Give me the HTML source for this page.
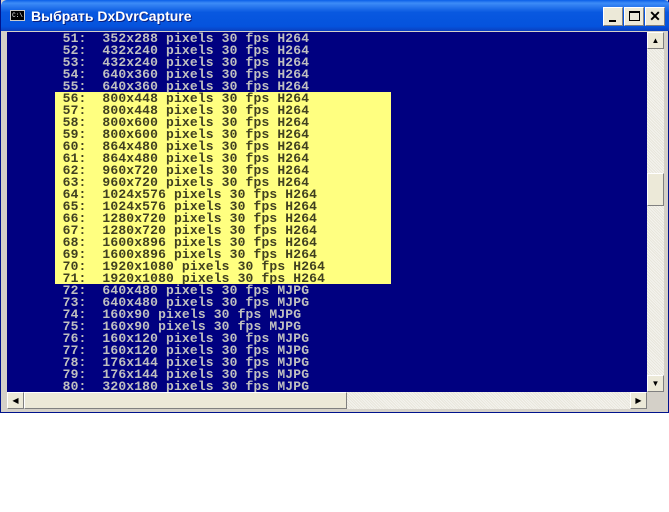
<!DOCTYPE html>
<html><head><meta charset="utf-8"><style>
*{margin:0;padding:0;box-sizing:border-box}
body{width:669px;height:512px;background:#fff;position:relative;overflow:hidden;font-family:"Liberation Sans",sans-serif}
#win{position:absolute;left:0;top:0;width:669px;height:413px;background:#d4d0c8;border:1px solid #00138c;border-top:none}
#title{position:absolute;left:0;top:0;width:669px;height:31px;background:linear-gradient(#0a5fe8 0%,#3d8cf7 10%,#0858e0 40%,#0553dd 85%,#0a3fbf 100%);border-radius:6px 6px 0 0}
#title .t{position:absolute;left:30px;top:8px;color:#fff;font-weight:bold;font-size:14px;text-shadow:1px 1px #0a1f80}
#ico{position:absolute;left:9px;top:10px;width:15px;height:11px;background:#000;border:1px solid #ccc;color:#fff;font-size:6px;line-height:9px;text-align:center;font-family:"Liberation Mono",monospace}
.btn{position:absolute;top:7px;width:20px;height:19px;background:#ece9d8;border:1px solid #fff;border-right-color:#808080;border-bottom-color:#808080}
#con{position:absolute;left:6px;top:32px;width:640px;height:360px;background:#000080;overflow:hidden}
#hl{position:absolute;left:48px;top:60px;width:336px;height:192px;background:#ffff80}
pre{position:absolute;left:0;top:1px;font-family:"Liberation Mono",monospace;font-weight:bold;font-size:13px;line-height:12px;letter-spacing:0.15px;color:#c0c0c0}
.y{color:#404020}
#vs{position:absolute;left:646px;top:32px;width:17px;height:360px;background:repeating-linear-gradient(45deg,#f4f3ee 0 1px,#e8e6dc 1px 2px)}
#hs{position:absolute;left:6px;top:392px;width:640px;height:17px;background:repeating-linear-gradient(45deg,#f4f3ee 0 1px,#e8e6dc 1px 2px)}
.sb{position:absolute;width:17px;height:17px;background:#ece9d8;border:1px solid #fff;border-right-color:#808080;border-bottom-color:#808080;font-size:8px;line-height:15px;text-align:center;color:#000}
</style></head><body>
<div id="win">
<div id="title"><div id="ico">C:\</div><div class="t">Выбрать DxDvrCapture</div>
<div class="btn" style="left:602px"><div style="position:absolute;left:5px;top:12px;width:7px;height:2px;background:#000"></div></div>
<div class="btn" style="left:623px"><div style="position:absolute;left:4px;top:3px;width:11px;height:10px;border:1px solid #000;border-top-width:2px"></div></div>
<div class="btn" style="left:644px;font-weight:bold;font-size:14px;line-height:16px;text-align:center">✕</div>
</div>
<div id="con"><div id="hl"></div>
<pre>       51:  352x288 pixels 30 fps H264
       52:  432x240 pixels 30 fps H264
       53:  432x240 pixels 30 fps H264
       54:  640x360 pixels 30 fps H264
       55:  640x360 pixels 30 fps H264
<span class="y">       56:  800x448 pixels 30 fps H264
       57:  800x448 pixels 30 fps H264
       58:  800x600 pixels 30 fps H264
       59:  800x600 pixels 30 fps H264
       60:  864x480 pixels 30 fps H264
       61:  864x480 pixels 30 fps H264
       62:  960x720 pixels 30 fps H264
       63:  960x720 pixels 30 fps H264
       64:  1024x576 pixels 30 fps H264
       65:  1024x576 pixels 30 fps H264
       66:  1280x720 pixels 30 fps H264
       67:  1280x720 pixels 30 fps H264
       68:  1600x896 pixels 30 fps H264
       69:  1600x896 pixels 30 fps H264
       70:  1920x1080 pixels 30 fps H264
       71:  1920x1080 pixels 30 fps H264</span>
       72:  640x480 pixels 30 fps MJPG
       73:  640x480 pixels 30 fps MJPG
       74:  160x90 pixels 30 fps MJPG
       75:  160x90 pixels 30 fps MJPG
       76:  160x120 pixels 30 fps MJPG
       77:  160x120 pixels 30 fps MJPG
       78:  176x144 pixels 30 fps MJPG
       79:  176x144 pixels 30 fps MJPG
       80:  320x180 pixels 30 fps MJPG</pre>
</div>
<div id="vs">
<div class="sb" style="left:0;top:0">▲</div>
<div class="sb" style="left:0;top:141px;height:33px"></div>
<div class="sb" style="left:0;top:343px">▼</div>
</div>
<div id="hs">
<div class="sb" style="left:0;top:0">◀</div>
<div class="sb" style="left:17px;top:0;width:323px"></div>
<div class="sb" style="left:623px;top:0">▶</div>
</div>
</div>
</body></html>
